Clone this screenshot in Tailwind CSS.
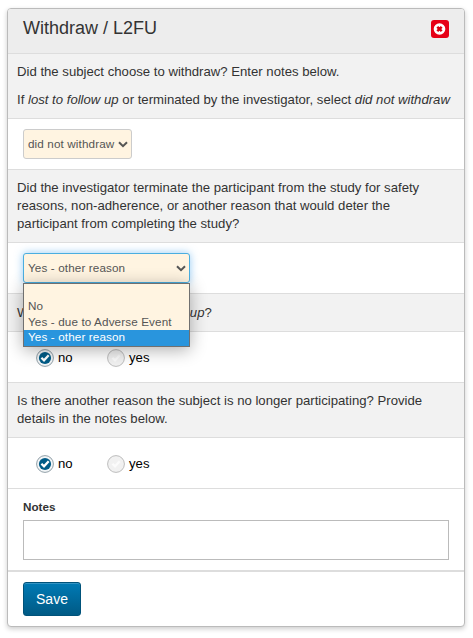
<!DOCTYPE html>
<html lang="en">
<head>
<meta charset="utf-8">
<title>Withdraw / L2FU</title>
<script src="https://cdn.jsdelivr.net/npm/@tailwindcss/browser@4"></script>
</head>
<body class="flow-root h-[638px] bg-white font-['Liberation_Sans',Arial,sans-serif] text-[13.17px] leading-[18px] text-[#333]">
<svg class="hidden">
  <symbol id="on" viewBox="0 0 18 18">
    <circle cx="9" cy="9" r="8.4" fill="#f2f5f7" stroke="#92a0a8"/>
    <circle cx="9" cy="9" r="6.1" fill="#005c87"/>
    <path d="M5.4 8.8 8 11.4 12.7 6.3" fill="none" stroke="#fff" stroke-width="2.3"/>
  </symbol>
  <symbol id="off" viewBox="0 0 18 18">
    <circle cx="9" cy="9" r="8.4" fill="#f1f1f1" stroke="#bdbdbd"/>
    <path d="M5.4 8.8 8 11.4 12.7 6.3" fill="none" stroke="#fbfbfb" stroke-width="2.3"/>
  </symbol>
  <symbol id="chev" viewBox="0 0 10 7">
    <path d="M1 1.2 5 5.2 9 1.2" fill="none" stroke="#555" stroke-width="2"/>
  </symbol>
</svg>
<main class="ml-[7px] mt-2 w-[458px] h-[619px] flex flex-col rounded border border-[#bbb] bg-white shadow-[0_2px_5px_rgba(0,0,0,0.2)]">
  <header class="h-[45px] shrink-0 flex justify-between rounded-t-[3px] border-b border-[#ddd] bg-[#ededed] pl-[15px] pr-[15px]">
    <h1 class="pt-[7px] text-[18px] leading-6">Withdraw / L2FU</h1>
    <svg class="mt-[11px] size-[18px]" viewBox="0 0 18 18">
      <rect width="18" height="18" rx="3" fill="#e60016"/>
      <circle cx="8.5" cy="9" r="5.8" fill="#fff"/>
      <path d="M6.3 6.8 10.7 11.2M10.7 6.8 6.3 11.2" stroke="#d8000f" stroke-width="2.5"/>
    </svg>
  </header>
  <section class="h-[65px] shrink-0 flex flex-col gap-[10px] border-b border-[#ddd] bg-[#f2f2f2] p-[9px] whitespace-nowrap">
    <p>Did the subject choose to withdraw? Enter notes below.</p>
    <p>If <i>lost to follow up</i> or terminated by the investigator, select <i>did not withdraw</i></p>
  </section>
  <section class="h-[51px] shrink-0 border-b border-[#ddd] pl-[15px] pt-[10px]">
    <div class="flex h-[30px] w-[109px] items-center justify-between rounded-[3px] border border-[#ccc] bg-[#fff4e1] pl-1 pr-[3px] text-[11.7px] tracking-[0.12px] text-[#555] whitespace-nowrap">
      <span>did not withdraw</span><svg class="h-[7px] w-[10px] shrink-0"><use href="#chev"/></svg>
    </div>
  </section>
  <section class="h-[73px] shrink-0 border-b border-[#ddd] bg-[#f2f2f2] p-[9px] whitespace-nowrap">
    <p>Did the investigator terminate the participant from the study for safety<br>reasons, non-adherence, or another reason that would deter the<br>participant from completing the study?</p>
  </section>
  <section class="h-[51px] shrink-0 border-b border-[#ddd] pl-[15px] pt-[10px]">
    <div class="relative z-10 w-[167px] text-[11.7px] tracking-[0.12px] text-[#555] whitespace-nowrap">
      <div class="flex h-[30px] items-center justify-between rounded-[3px] border border-[#4aaee0] bg-[#fff4e1] pl-1 pr-[3px] shadow-[0_0_8px_rgba(82,168,236,0.6)]">
        <span>Yes - other reason</span><svg class="h-[7px] w-[10px] shrink-0"><use href="#chev"/></svg>
      </div>
      <ul class="absolute left-0 top-[30px] flex h-[64px] w-[167px] flex-col border border-[#707070] bg-[#fff4e1] leading-[16px] shadow-[0_3px_16px_rgba(0,0,0,0.32)]">
        <li class="h-[14px] shrink-0"></li>
        <li class="h-4 shrink-0 pl-1">No</li>
        <li class="h-4 shrink-0 pl-1">Yes - due to Adverse Event</li>
        <li class="h-4 shrink-0 bg-[#2995dd] pl-1 leading-[14px] text-white">Yes - other reason</li>
      </ul>
    </div>
  </section>
  <section class="h-[38px] shrink-0 border-b border-[#ddd] bg-[#f2f2f2] px-[9px] pt-[10px] whitespace-nowrap">
    <p>Was the subject <i>lost to follow up</i>?</p>
  </section>
  <section class="flex h-[51px] shrink-0 items-center border-b border-[#ddd] pl-7 pt-[2px] text-black">
    <label class="flex w-[71px] items-center gap-1"><svg class="size-[18px]"><use href="#on"/></svg>no</label>
    <label class="flex items-center gap-1"><svg class="size-[18px]"><use href="#off"/></svg>yes</label>
  </section>
  <section class="h-[55px] shrink-0 border-b border-[#ddd] bg-[#f2f2f2] p-[9px] whitespace-nowrap">
    <p>Is there another reason the subject is no longer participating? Provide<br>details in the notes below.</p>
  </section>
  <section class="flex h-[51px] shrink-0 items-center border-b border-[#ddd] pl-7 pt-[2px] text-black">
    <label class="flex w-[71px] items-center gap-1"><svg class="size-[18px]"><use href="#on"/></svg>no</label>
    <label class="flex items-center gap-1"><svg class="size-[18px]"><use href="#off"/></svg>yes</label>
  </section>
  <section class="h-[83px] shrink-0 border-b-2 border-[#ddd] px-[15px] pt-[9px]">
    <h2 class="text-[11.7px] font-bold">Notes</h2>
    <div class="mt-1 h-10 w-[426px] border border-[#bbb] bg-white"></div>
  </section>
  <footer class="pl-[15px] pt-[10px]">
    <button class="block h-[34px] w-[58px] rounded-[3px] border border-[#00527a] bg-linear-to-b from-[#007ab5] to-[#005a85] text-[14px] leading-[18px] text-white shadow-[inset_0_1px_0_rgba(255,255,255,0.2)]">Save</button>
  </footer>
</main>
</body>
</html>
